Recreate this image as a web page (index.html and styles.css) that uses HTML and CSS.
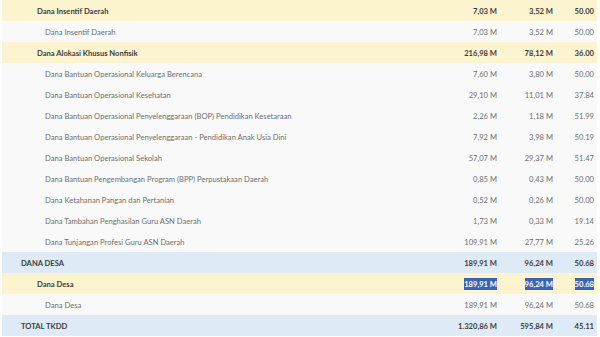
FILE: index.html
```html
<!DOCTYPE html>
<html lang="id">
<head>
<meta charset="utf-8">
<title>TKDD</title>
<link rel="stylesheet" href="styles.css">
</head>
<body>
<div class="wrap">
<table class="tkdd">
<colgroup><col class="c-name"><col class="c-num1"><col class="c-num2"><col class="c-pct"></colgroup>
<tbody>
<tr class="sub"><td class="l1">Dana Insentif Daerah</td><td>7,03 M</td><td>3,52 M</td><td>50.00</td></tr>
<tr class="item"><td class="l2">Dana Insentif Daerah</td><td>7,03 M</td><td>3,52 M</td><td>50.00</td></tr>
<tr class="sub"><td class="l1">Dana Alokasi Khusus Nonfisik</td><td>216,98 M</td><td>78,12 M</td><td>36.00</td></tr>
<tr class="item"><td class="l2">Dana Bantuan Operasional Keluarga Berencana</td><td>7,60 M</td><td>3,80 M</td><td>50.00</td></tr>
<tr class="item"><td class="l2">Dana Bantuan Operasional Kesehatan</td><td>29,10 M</td><td>11,01 M</td><td>37.84</td></tr>
<tr class="item"><td class="l2">Dana Bantuan Operasional Penyelenggaraan (BOP) Pendidikan Kesetaraan</td><td>2,26 M</td><td>1,18 M</td><td>51.99</td></tr>
<tr class="item"><td class="l2">Dana Bantuan Operasional Penyelenggaraan - Pendidikan Anak Usia Dini</td><td>7,92 M</td><td>3,98 M</td><td>50.19</td></tr>
<tr class="item"><td class="l2">Dana Bantuan Operasional Sekolah</td><td>57,07 M</td><td>29,37 M</td><td>51.47</td></tr>
<tr class="item"><td class="l2">Dana Bantuan Pengembangan Program (BPP) Perpustakaan Daerah</td><td>0,85 M</td><td>0,43 M</td><td>50.00</td></tr>
<tr class="item"><td class="l2">Dana Ketahanan Pangan dan Pertanian</td><td>0,52 M</td><td>0,26 M</td><td>50.00</td></tr>
<tr class="item"><td class="l2">Dana Tambahan Penghasilan Guru ASN Daerah</td><td>1,73 M</td><td>0,33 M</td><td>19.14</td></tr>
<tr class="item"><td class="l2">Dana Tunjangan Profesi Guru ASN Daerah</td><td>109,91 M</td><td>27,77 M</td><td>25.26</td></tr>
<tr class="top"><td class="l0">DANA DESA</td><td>189,91 M</td><td>96,24 M</td><td>50.68</td></tr>
<tr class="sub"><td class="l1">Dana Desa</td><td><span class="sel">189,91 M</span></td><td><span class="sel">96,24 M</span></td><td><span class="sel">50.68</span></td></tr>
<tr class="item"><td class="l2">Dana Desa</td><td>189,91 M</td><td>96,24 M</td><td>50.68</td></tr>
<tr class="top"><td class="l0">TOTAL TKDD</td><td>1.320,86 M</td><td>595,84 M</td><td>45.11</td></tr>
</tbody>
</table>
</div>
</body>
</html>
```
FILE: styles.css
```css
html, body {
  margin: 0;
  padding: 0;
  background: #ffffff;
}
.wrap {
  padding: 0 3px 0 2px;
}
.tkdd {
  width: 100%;
  border-collapse: collapse;
  table-layout: fixed;
  font-family: Lato, "Open Sans", sans-serif;
  font-size: 7.6px;
  color: #6f6f6f;
}
.c-name { width: auto; }
.c-num1 { width: 72px; }
.c-num2 { width: 56px; }
.c-pct { width: 41px; }
.tkdd td {
  height: 21px;
  padding: 0 3px 0 0;
  text-align: right;
  white-space: nowrap;
  vertical-align: middle;
}
.tkdd td:first-child {
  text-align: left;
}
.tkdd .l0 { padding-left: 19px; }
.tkdd .l1 { padding-left: 35px; }
.tkdd .l2 { padding-left: 43px; }
.item { background: #f9f9f9; }
.sub { background: #fcf3cf; }
.top { background: #deebf6; }
.sub td, .top td {
  font-weight: 700;
  color: #3d3d3d;
}
.sel {
  background: #3a62b6;
  color: #ffffff;
  display: inline-block;
  line-height: 12px;
}
```
